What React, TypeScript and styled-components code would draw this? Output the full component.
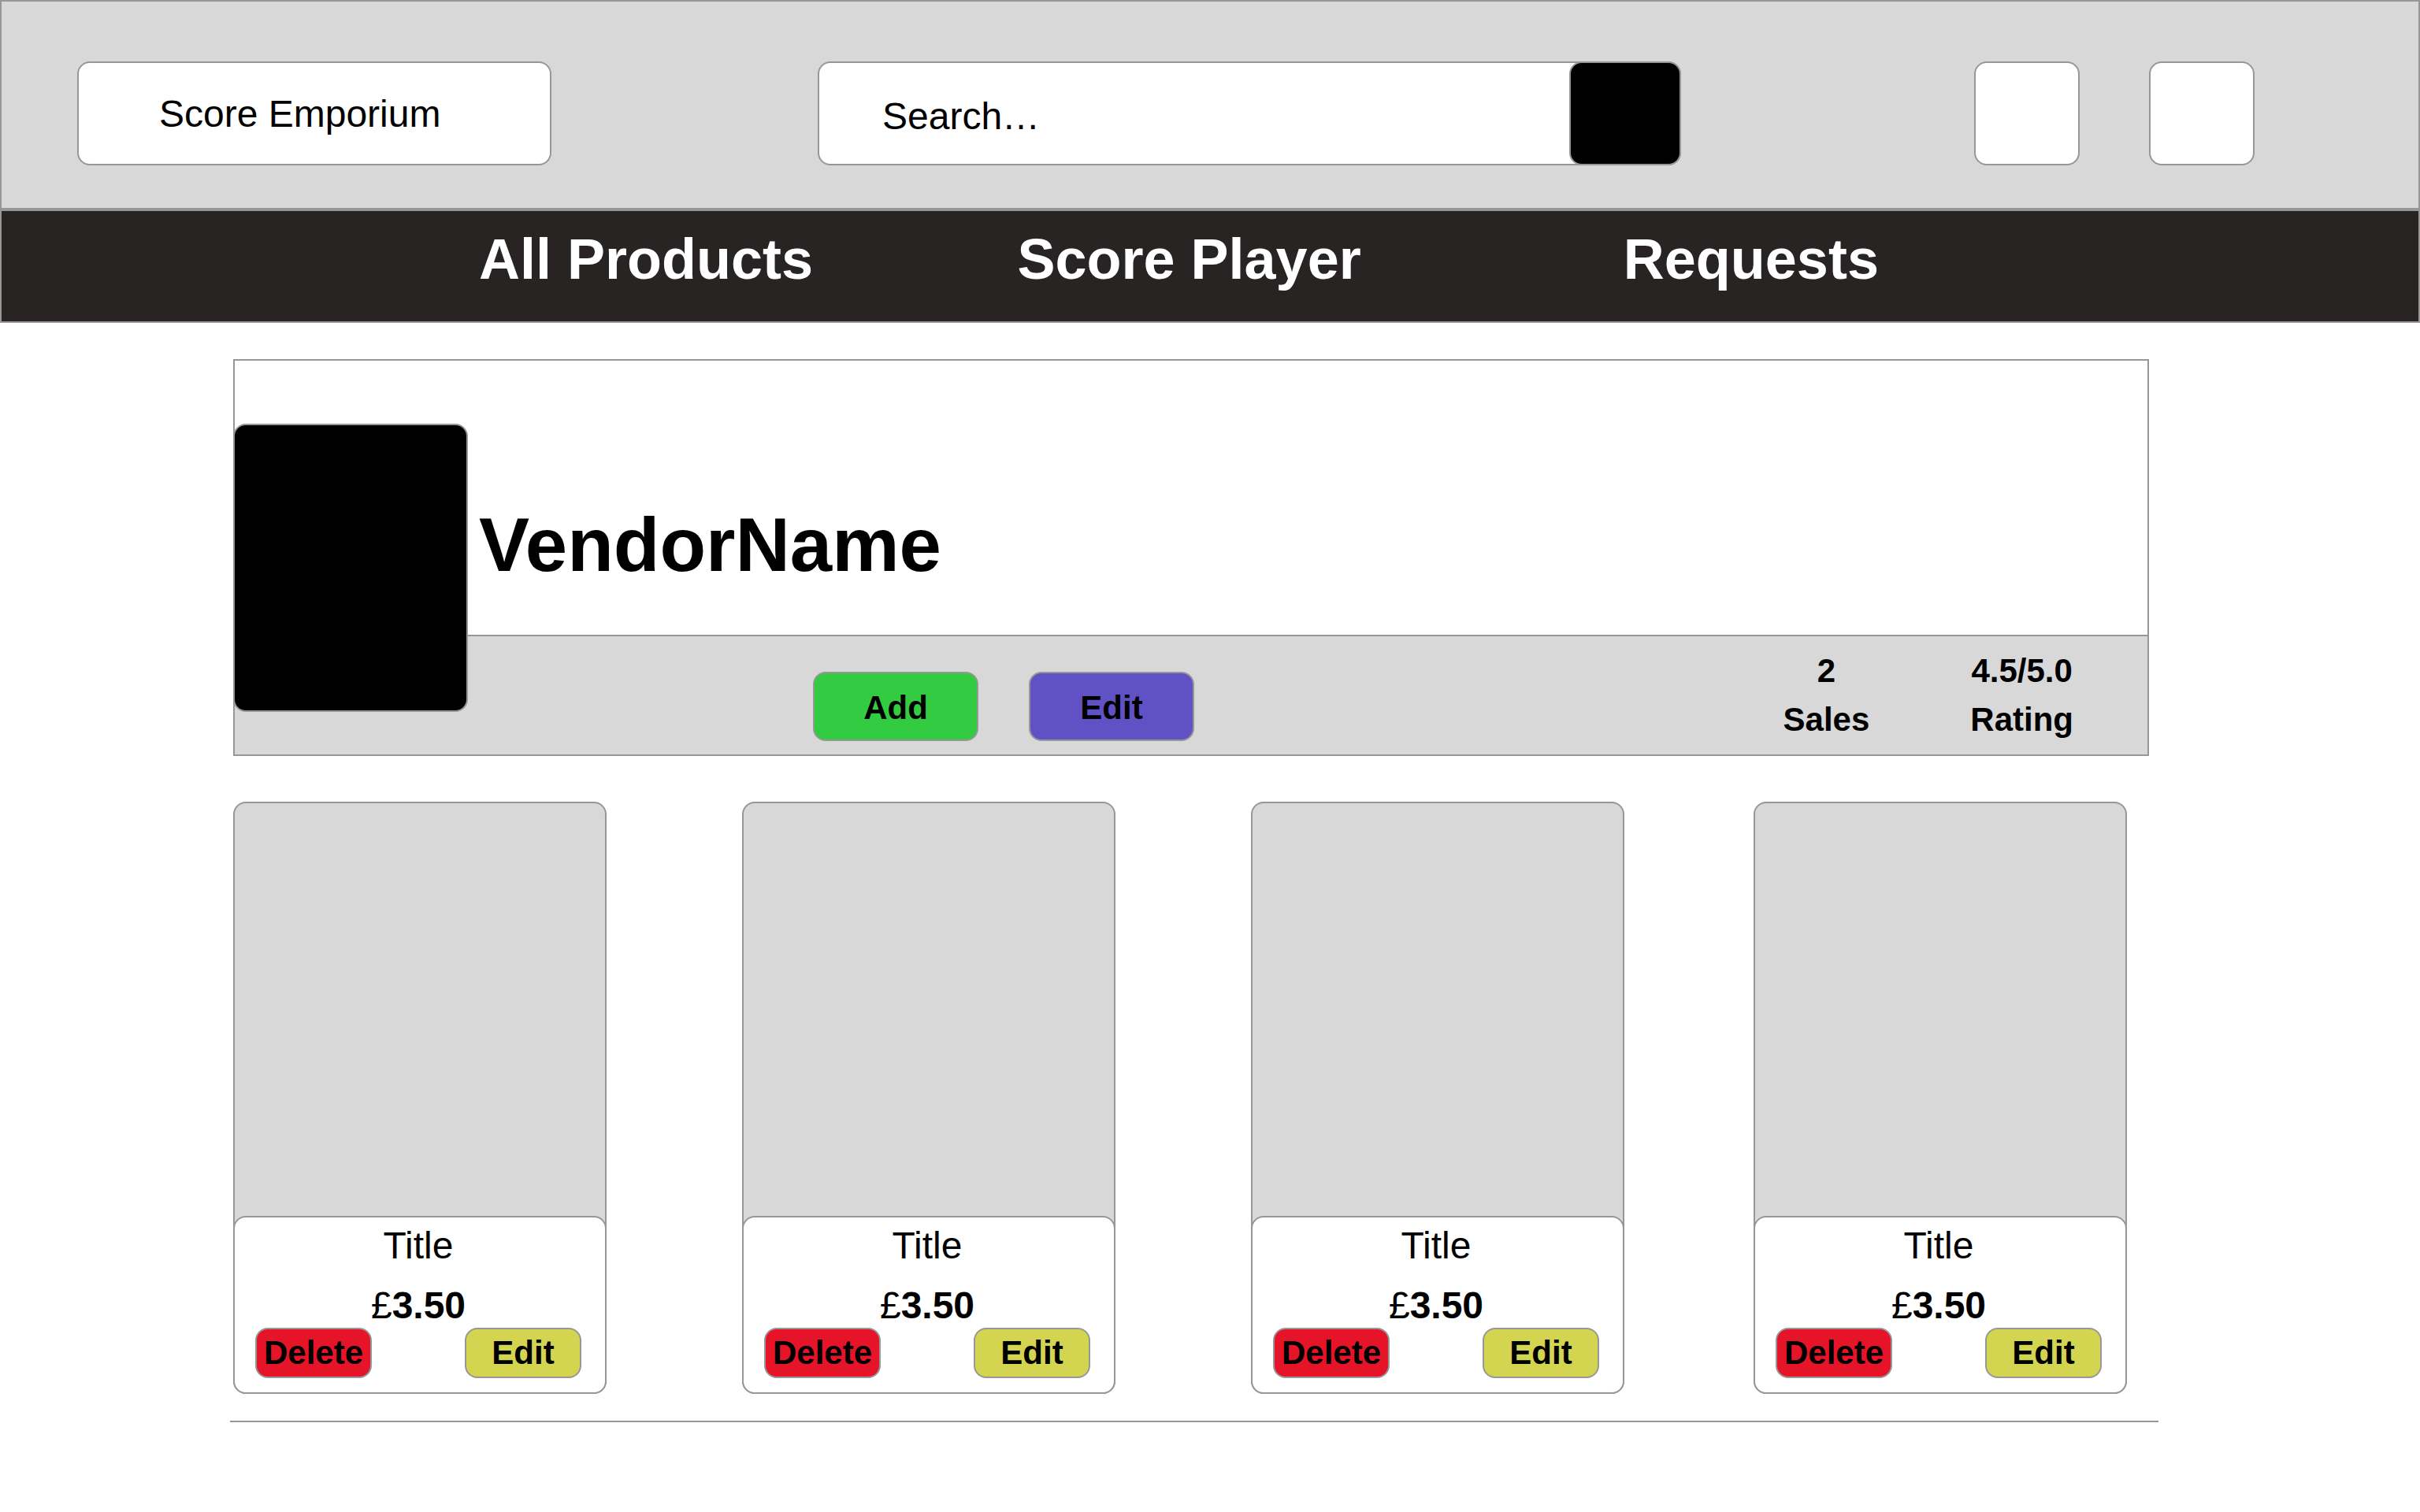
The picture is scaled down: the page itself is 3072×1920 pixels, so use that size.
import React from "react";
import styled, { createGlobalStyle } from "styled-components";

const line = "#979797";
const panel = "#d8d8d8";

const GlobalStyle = createGlobalStyle`
  *, *::before, *::after { box-sizing: border-box; }
  body {
    margin: 0;
    background: #fff;
    color: #000;
    font-family: "Liberation Sans", Arial, Helvetica, sans-serif;
  }
  h1, h2, p, dl, dd, ul { margin: 0; padding: 0; }
  button, input { font: inherit; color: inherit; }
`;

const Header = styled.header`
  display: flex;
  align-items: center;
  padding: 76px 208px 54px 96px;
  border: 2px solid ${line};
  background: ${panel};
`;

const Logo = styled.a`
  display: flex;
  align-items: center;
  width: 602px;
  height: 132px;
  padding-left: 102px;
  border: 2px solid ${line};
  border-radius: 16px;
  background: #fff;
  color: #000;
  font-size: 48px;
  text-decoration: none;
`;

const SearchForm = styled.form`
  display: flex;
  flex: 1;
  height: 132px;
  margin: 0 372px 0 338px;
  border: 2px solid ${line};
  border-radius: 16px;
  background: #fff;
`;

const SearchInput = styled.input`
  flex: 1;
  min-width: 0;
  padding: 6px 24px 0 80px;
  border: 0;
  outline: 0;
  background: transparent;
  font-size: 48px;

  &::placeholder {
    color: #000;
    opacity: 1;
  }
`;

const SearchButton = styled.button`
  width: 142px;
  margin: -2px;
  border: 2px solid ${line};
  border-radius: 16px;
  background: #000;
`;

const HeaderTools = styled.div`
  display: flex;
  gap: 88px;
`;

const ToolButton = styled.button`
  width: 134px;
  height: 132px;
  border: 2px solid ${line};
  border-radius: 16px;
  background: #fff;
`;

const Nav = styled.nav`
  display: grid;
  grid-template-columns: 684fr 770fr 1010fr;
  padding: 20px 0 38px 606px;
  border: 2px solid ${line};
  background: #292424;
`;

const NavLink = styled.a`
  color: #fff;
  font-size: 72px;
  font-weight: 700;
  line-height: 82px;
  text-decoration: none;
  white-space: nowrap;
`;

const Main = styled.main`
  padding: 46px 332px 48px 292px;
`;

const Vendor = styled.section`
  margin: 0 12px 0 4px;
  border: 2px solid ${line};
`;

const VendorBanner = styled.div`
  display: flex;
  align-items: flex-start;
  gap: 14px;
  padding-top: 80px;
`;

const VendorPhoto = styled.div`
  position: relative;
  z-index: 1;
  width: 298px;
  height: 366px;
  margin: 0 0 -98px -2px;
  border: 2px solid ${line};
  border-radius: 16px;
  background: #000;
`;

const VendorName = styled.h1`
  padding-top: 98px;
  font-size: 96px;
  line-height: 112px;
`;

const VendorBar = styled.div`
  display: flex;
  align-items: center;
  justify-content: space-between;
  height: 152px;
  padding: 0 94px 0 734px;
  border-top: 2px solid ${line};
  background: ${panel};
`;

const VendorActions = styled.div`
  display: flex;
  gap: 64px;
  padding-top: 28px;
`;

const Button = styled.button<{ $fill: string; $large?: boolean }>`
  width: ${(p) => (p.$large ? 210 : 148)}px;
  height: ${(p) => (p.$large ? 88 : 64)}px;
  padding: ${(p) => (p.$large ? "4px 0 0" : "0")};
  border: 2px solid ${line};
  border-radius: 16px;
  background: ${(p) => p.$fill};
  font-size: 42px;
  font-weight: 700;
  line-height: 48px;
`;

const Stats = styled.dl`
  display: flex;
  gap: 128px;
  font-size: 42px;
  font-weight: 700;
  line-height: 62px;
  text-align: center;
`;

const Stat = styled.div`
  display: flex;
  flex-direction: column-reverse;
`;

const Products = styled.ul`
  display: grid;
  grid-template-columns: 646fr 646fr 638fr 474fr;
  margin: 58px 40px 0 4px;
  list-style: none;
`;

const Product = styled.li`
  width: 474px;
  border: 2px solid ${line};
  border-radius: 16px;
  background: ${panel};
`;

const Cover = styled.div`
  height: 524px;
`;

const Details = styled.div`
  display: flex;
  flex-direction: column;
  margin: 0 -2px -2px;
  padding: 8px 30px 18px 26px;
  border: 2px solid ${line};
  border-radius: 16px;
  background: #fff;
  font-size: 48px;
  line-height: 56px;
  text-align: center;
`;

const ProductTitle = styled.h2`
  margin-bottom: 20px;
  font-size: 48px;
  font-weight: 400;
`;

const ProductActions = styled.div`
  display: flex;
  justify-content: space-between;
`;

const Divider = styled.hr`
  height: 2px;
  margin: 34px 0 0;
  border: 0;
  background: ${line};
`;

const links = ["All Products", "Score Player", "Requests"];

const stats = [
  { label: "Sales", value: "2" },
  { label: "Rating", value: "4.5/5.0" },
];

const products = [
  { id: 1, title: "Title", price: "3.50" },
  { id: 2, title: "Title", price: "3.50" },
  { id: 3, title: "Title", price: "3.50" },
  { id: 4, title: "Title", price: "3.50" },
];

export default function App() {
  return (
    <>
      <GlobalStyle />
      <Header>
        <Logo href="#">Score Emporium</Logo>
        <SearchForm role="search" onSubmit={(e) => e.preventDefault()}>
          <SearchInput type="text" aria-label="Search" placeholder="Search…" />
          <SearchButton type="submit" aria-label="Search" />
        </SearchForm>
        <HeaderTools>
          <ToolButton type="button" aria-label="Account" />
          <ToolButton type="button" aria-label="Basket" />
        </HeaderTools>
      </Header>
      <Nav>
        {links.map((label) => (
          <NavLink key={label} href="#">
            {label}
          </NavLink>
        ))}
      </Nav>
      <Main>
        <Vendor>
          <VendorBanner>
            <VendorPhoto />
            <VendorName>VendorName</VendorName>
          </VendorBanner>
          <VendorBar>
            <VendorActions>
              <Button type="button" $fill="#33cb41" $large>
                Add
              </Button>
              <Button type="button" $fill="#6051c4" $large>
                Edit
              </Button>
            </VendorActions>
            <Stats>
              {stats.map((s) => (
                <Stat key={s.label}>
                  <dt>{s.label}</dt>
                  <dd>{s.value}</dd>
                </Stat>
              ))}
            </Stats>
          </VendorBar>
        </Vendor>
        <Products>
          {products.map((p) => (
            <Product key={p.id}>
              <Cover />
              <Details>
                <ProductTitle>{p.title}</ProductTitle>
                <p>
                  £<strong>{p.price}</strong>
                </p>
                <ProductActions>
                  <Button type="button" $fill="#e61428">
                    Delete
                  </Button>
                  <Button type="button" $fill="#d3d550">
                    Edit
                  </Button>
                </ProductActions>
              </Details>
            </Product>
          ))}
        </Products>
        <Divider />
      </Main>
    </>
  );
}
